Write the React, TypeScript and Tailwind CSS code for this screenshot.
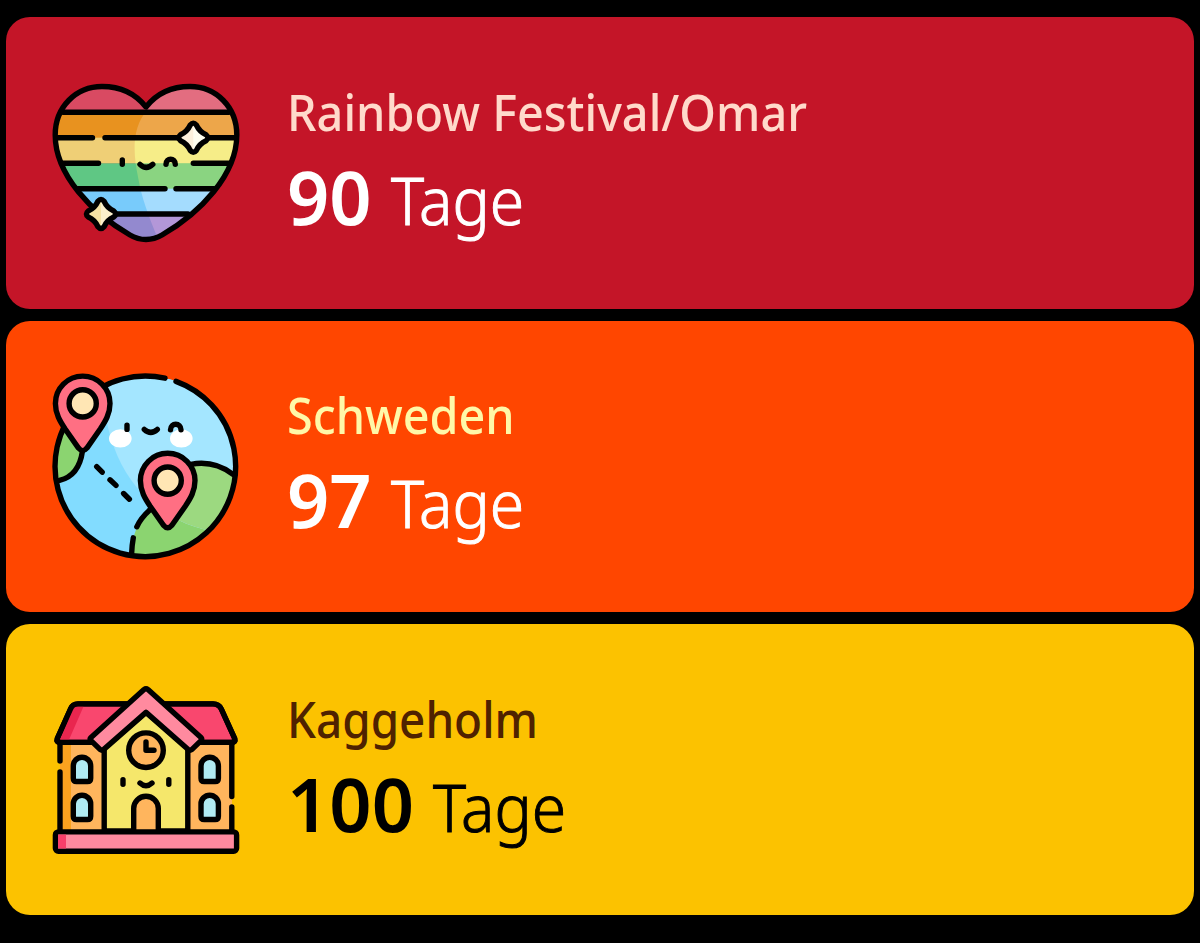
import React from 'react';
import { clsx } from 'clsx';

const STAR =
    'M-3 -12.8 Q0 -16.4 3 -12.8 Q6 -6 12.8 -3 Q16.4 0 12.8 3 Q6 6 3 12.8 Q0 16.4 -3 12.8 Q-6 6 -12.8 3 Q-16.4 0 -12.8 -3 Q-6 -6 -3 -12.8Z';
const HEART =
    'M94 38 C83 24 68 17.5 50 17.5 C24 17.5 3.2 38 3.2 66 C3.2 106 40 144 78 166 C88 172 100 172 110 166 C148 144 184.8 106 184.8 66 C184.8 38 164 17.5 138 17.5 C120 17.5 105 24 94 38Z';
const PIN =
    'M30.7 3.3 C15.6 3.3 3.4 15.5 3.4 30.6 C3.4 41 8 48.5 13 56 L26.5 75.3 Q30.7 80.3 34.9 75.3 L48.4 56 C53.4 48.5 58 41 58 30.6 C58 15.5 45.8 3.3 30.7 3.3Z';

const BANDS = [
    { y: 10, h: 34, dark: '#d94a62', light: '#e36d80' },
    { y: 43, h: 26, dark: '#e8921f', light: '#eda64a' },
    { y: 68.7, h: 26, dark: '#efcf76', light: '#f6ed88' },
    { y: 94.3, h: 26, dark: '#5fc784', light: '#8ad481' },
    { y: 119.7, h: 26, dark: '#78cbfb', light: '#a4dcfe' },
    { y: 145, h: 30, dark: '#9389cf', light: '#b397d8' },
];

const svgProps = {
    viewBox: '0 0 188 188',
    className: 'w-[188px] h-[188px] shrink-0',
    fill: 'none',
    stroke: '#000',
    strokeWidth: 5.4,
    strokeLinecap: 'round' as const,
    strokeLinejoin: 'round' as const,
};

function Sparkle({ x, y, left, right }: { x: number; y: number; left: string; right: string }) {
    return (
        <g transform={`translate(${x} ${y})`}>
            <path d={STAR} fill={left} stroke="none" />
            <path d="M0 -14 Q6 -6 14 0 Q6 6 0 14Z" fill={right} stroke="none" />
            <path d={STAR} />
        </g>
    );
}

function HeartIcon() {
    return (
        <svg {...svgProps}>
            <clipPath id="heart"><path d={HEART} /></clipPath>
            <clipPath id="heart-light"><path d="M96 40 C78 60 82 88 86 108 C90 130 96 146 107 172 H190 V0 H96Z" /></clipPath>
            <g clipPath="url(#heart)" stroke="none">
                {BANDS.map((b) => <rect key={b.y} x="0" y={b.y} width="188" height={b.h} fill={b.dark} />)}
                <g clipPath="url(#heart-light)">
                    {BANDS.map((b) => <rect key={b.y} x="0" y={b.y} width="188" height={b.h} fill={b.light} />)}
                </g>
            </g>
            <path d={HEART} />
            <path d="M11 43.3H177 M5 68.7H40.5 M53 68.7H183 M10 94.3H46.5 M141.3 94.3H178 M26 119.7H113 M124 119.7H162 M52 145H136" />
            {/* Face */}
            <path d="M70.3 91V95.3 M88 95.3Q94.3 101.5 100.8 95.3 M114 95.3C114 88.5 123.3 88.5 123.3 95.3" />
            <Sparkle x={141.3} y={68.7} left="#fdf0dc" right="#fffdf0" />
            <Sparkle x={49} y={145} left="#f6e2a4" right="#fcf0cc" />
        </svg>
    );
}

function MapPin() {
    return (
        <>
            <path d={PIN} fill="#ff6f83" />
            <circle cx="30.7" cy="30.6" r="13.6" fill="#ffe6b4" />
        </>
    );
}

function GlobeIcon() {
    return (
        <svg {...svgProps} viewBox="0 -0.8 188 188">
            <clipPath id="globe"><circle cx="93.7" cy="93.6" r="90.3" /></clipPath>
            <clipPath id="globe-light"><path d="M50 0 C50 90 92 148 168 160 L190 150 V0Z" /></clipPath>
            <g clipPath="url(#globe)" stroke="none">
                <rect width="188" height="188" fill="#82dcff" />
                <path d="M79.5 184 C80 154 92 140 104 130 L130 93 C150 87 170 92 188 106 V188Z M0 50H34C34 90 26 105 7 107.5H0Z" fill="#8bd470" />
                <g clipPath="url(#globe-light)">
                    <rect width="188" height="188" fill="#a4e6ff" />
                    <path d="M79.5 184 C80 154 92 140 104 130 L130 93 C150 87 170 92 188 106 V188Z" fill="#9cd980" />
                </g>
            </g>
            <path d="M124 8.6A90.3 90.3 0 1 1 113 5.4" />
            <path d="M7.5 107.5Q27 103 30.5 78" />
            <path d="M79.6 181Q80 172 81.3 165 M84.8 154Q89 145 98 137 M139 91.5C155 88.5 169 92.5 181 101.5" />
            <path d="M44.7 93.8L50.2 99.4 M58 107L64 112.6 M71.6 120.7L77.4 126.4" />
            <g fill="#fff" stroke="none">
                <ellipse cx="68.3" cy="65.6" rx="11.3" ry="9.2" />
                <ellipse cx="129.3" cy="65.6" rx="11.3" ry="9.2" />
            </g>
            <path d="M75 52.3V56.6 M92.3 56.6Q98.8 62.5 105.3 56.6 M118.5 57C118.5 49.5 129 49.5 129 57" />
            <MapPin />
            <g transform="translate(85 77.2)"><MapPin /></g>
        </svg>
    );
}

function SchoolIcon() {
    return (
        <svg {...svgProps}>
            <g stroke="none">
                <rect x="8" y="64" width="172" height="92" fill="#ffb55d" />
                <rect x="8" y="64" width="11" height="92" fill="#fba21f" />
            </g>
            <path d="M18.5 33Q20.5 27.9 26 27.9H161Q167 27.9 169.3 33L182.7 62.5Q183.8 66.4 180 66.4H8Q4 66.4 5.3 62.5Z" fill="#f9476e" />
            <path d="M21.5 30.6H31.5L17 63.7H8Z" fill="#e9264f" stroke="none" />
            <path d="M18.5 33Q20.5 27.9 26 27.9H161Q167 27.9 169.3 33L182.7 62.5Q183.8 66.4 180 66.4H8Q4 66.4 5.3 62.5Z" />
            <path d="M8 66.4V85 M8 96V155 M179.8 66.4V120.6 M179.8 131V155" />
            <path d="M52.2 155V72L94 36L135.8 72V155Z" fill="#f5e76b" />
            <path d="M92 13.6Q94 12 96 13.6L149 61.4Q150.6 63 149 64.6L140 73.4Q138 75 136.2 73.4L94 36.4L51.8 73.4Q50 75 48 73.4L39 64.6Q37.4 63 39 61.4Z" fill="#ff8a9f" />
            <circle cx="94" cy="74.2" r="17.3" fill="#ffb55d" />
            <path d="M94 66V74.2H102" />
            {/* Windows */}
            {[21.3, 149].map((x) =>
                [81.2, 119.2].map((y) => (
                    <path
                        key={`${x}-${y}`}
                        transform={`translate(${x} ${y})`}
                        d="M0 8.7A8.7 8.7 0 0 1 17.4 8.7V21Q17.4 24.3 14.2 24.3H3.2Q0 24.3 0 21Z"
                        fill="#b0ebf3"
                    />
                ))
            )}
            <path d="M81.7 155V132.5A12.3 12.3 0 0 1 106.3 132.5V155" fill="#ffb55d" />
            <path d="M71 103.8V108.3 M116.8 103.8V108.3 M88 107Q94 112.5 100 107" />
            <rect x="3.4" y="155.9" width="181.2" height="19.3" rx="3" fill="#ff8a9f" />
            <rect x="6" y="158.6" width="8" height="13.9" fill="#f93f6a" stroke="none" />
        </svg>
    );
}

interface Countdown {
    title: string;
    days: number;
    card: string;
    titleColor: string;
    icon: React.ReactNode;
}

const countdowns: Countdown[] = [
    { title: 'Rainbow Festival/Omar', days: 90, card: 'bg-[#c41528] text-white', titleColor: 'text-[#ffdacb] scale-x-[0.937]', icon: <HeartIcon /> },
    { title: 'Schweden', days: 97, card: 'bg-[#ff4600] text-white', titleColor: 'text-[#fff8a8] scale-x-[0.935]', icon: <GlobeIcon /> },
    { title: 'Kaggeholm', days: 100, card: 'bg-[#fcc200] text-black', titleColor: 'text-[#4f2200] scale-x-[0.917]', icon: <SchoolIcon /> },
];

export default function App() {
    return (
        <div className="h-[943px] bg-black px-1.5 pt-[17.3px] flex flex-col gap-3 font-['Noto_Sans',sans-serif]">
            {countdowns.map((c) => (
                <div key={c.title} className={clsx('h-[291.4px] rounded-3xl pl-[46px] flex items-center gap-12 shrink-0', c.card)}>
                    {c.icon}
                    <div className="whitespace-nowrap pt-3 -ml-px">
                        <div className={clsx('text-[50px] leading-[58px] font-medium origin-left', c.titleColor)}>{c.title}</div>
                        <div className="flex items-baseline gap-[19px] leading-[112px]">
                            <span className="text-[74px] font-semibold">{c.days}</span>
                            <span className="text-[67px] font-light origin-left scale-x-[0.93] [-webkit-text-stroke:1px_currentColor]">Tage</span>
                        </div>
                    </div>
                </div>
            ))}
        </div>
    );
}
